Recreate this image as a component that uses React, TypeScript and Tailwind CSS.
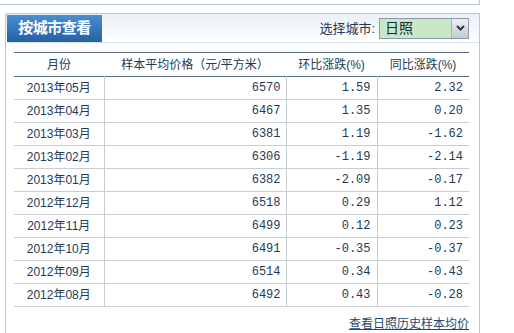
import React from "react"

const rows = [
  ["2013年05月", "6570", "1.59", "2.32"],
  ["2013年04月", "6467", "1.35", "0.20"],
  ["2013年03月", "6381", "1.19", "-1.62"],
  ["2013年02月", "6306", "-1.19", "-2.14"],
  ["2013年01月", "6382", "-2.09", "-0.17"],
  ["2012年12月", "6518", "0.29", "1.12"],
  ["2012年11月", "6499", "0.12", "0.23"],
  ["2012年10月", "6491", "-0.35", "-0.37"],
  ["2012年09月", "6514", "0.34", "-0.43"],
  ["2012年08月", "6492", "0.43", "-0.28"],
]

const sans = "font-['Liberation_Sans','Noto_Sans_CJK_SC',sans-serif]"
const mono = "font-['Liberation_Mono','Noto_Sans_CJK_SC',monospace]"

export default function App() {
  return (
    <div className={`w-[514px] h-[333px] overflow-hidden bg-white text-[#1c3b58] ${sans}`}>
      <div className="h-[5px] w-[480px] border-b border-r border-[#b7c8d6]" />

      <div className="ml-[5px] mt-[8px] w-[475px] h-[400px] border-x border-t border-[#b7c8d6]">
        {/* title bar */}
        <div className="flex h-[29px] pt-[1px] bg-gradient-to-b from-[#e9f0f7] to-white border-b border-dotted border-[#c6d3df]">
          <div className="ml-[1px] w-[95px] flex items-center justify-center bg-gradient-to-b from-[#4a8fd0] to-[#2460a2] text-white font-bold text-[15px] tracking-[-0.5px]">
            按城市查看
          </div>
          <div className="ml-auto mr-[10px] flex items-center">
            <span className="text-[13px] mr-[4px]">选择城市:</span>
            <div className="flex h-[21px] w-[90px] border border-[#8d9aa6] mt-[-1px]">
              <div className="flex-1 bg-[#c8e7c6] text-[14px] leading-[19px] pl-[5px] text-[#10263c]">日照</div>
              <div className="w-[17px] border-l border-[#a9b2bb] bg-gradient-to-b from-[#eef0f2] to-[#c3c9cf] flex items-center justify-center">
                <svg width="9" height="6" viewBox="0 0 9 6">
                  <path d="M1 1 L4.5 4.5 L8 1" fill="none" stroke="#2d3a46" strokeWidth="2" />
                </svg>
              </div>
            </div>
          </div>
        </div>

        {/* table */}
        <table className="ml-[8px] mt-[9px] w-[455px] border-collapse text-[12px]">
          <colgroup>
            <col className="w-[90px]" />
            <col className="w-[182px]" />
            <col className="w-[91px]" />
            <col className="w-[92px]" />
          </colgroup>
          <thead>
            <tr className="h-[24px] border-y border-[#566b7d]">
              <th className="font-normal text-center">月份</th>
              <th className="font-normal text-center">样本平均价格（元/平方米）</th>
              <th className="font-normal text-center">环比涨跌(%)</th>
              <th className="font-normal text-center">同比涨跌(%)</th>
            </tr>
          </thead>
          <tbody>
            {rows.map((r) => (
              <tr key={r[0]} className="h-[23px] border-b border-[#c8cdd2]">
                <td className="text-center border-r border-[#c8cdd2]">{r[0]}</td>
                <td className={`text-right pr-[5px] border-r border-[#c8cdd2] ${mono}`}>{r[1]}</td>
                <td className={`text-right pr-[6px] border-r border-[#c8cdd2] ${mono}`}>{r[2]}</td>
                <td className={`text-right pr-[6px] ${mono}`}>{r[3]}</td>
              </tr>
            ))}
          </tbody>
        </table>

        <div className="w-[463px] mt-[8px] text-right text-[12px]">
          <a href="#" className="underline text-[#1d4a70]">查看日照历史样本均价</a>
        </div>
      </div>
    </div>
  )
}
